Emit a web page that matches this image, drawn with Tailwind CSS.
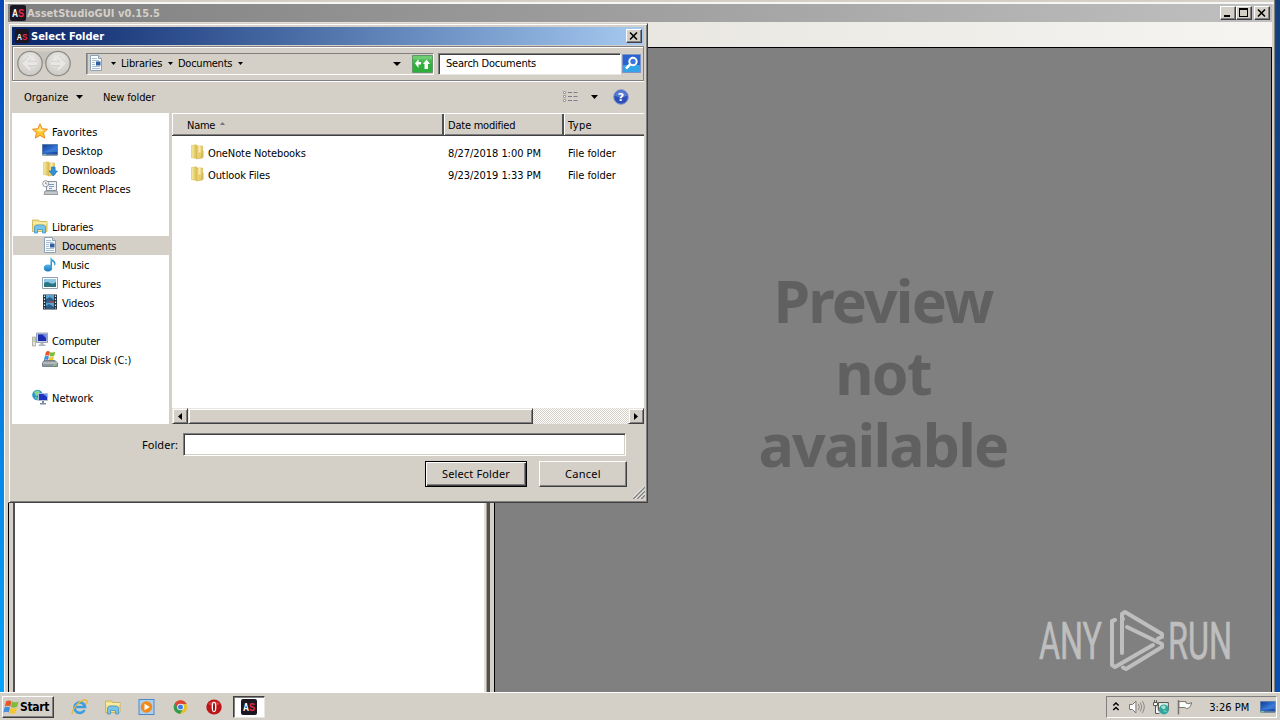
<!DOCTYPE html>
<html lang="en">
<head>
<meta charset="utf-8">
<title>AssetStudioGUI v0.15.5</title>
<script src="https://cdn.jsdelivr.net/npm/@tailwindcss/browser@4"></script>
</head>
<body class="w-[1280px] h-[720px] overflow-hidden relative flex flex-col text-[11px] leading-[13px] text-black whitespace-nowrap font-['DejaVu_Sans_Condensed','DejaVu_Sans',sans-serif] bg-[#d4d0c8]">

<!-- Shared icons -->
<svg class="absolute w-0 h-0">
  <defs>
    <linearGradient id="fold" x1="0" x2="1"><stop offset="0" stop-color="#f8eda6"/><stop offset="1" stop-color="#dcbc4c"/></linearGradient>
    <linearGradient id="scr" x1="0" y1="0" x2="1" y2="1"><stop offset="0" stop-color="#123a92"/><stop offset=".5" stop-color="#2f6fd0"/><stop offset="1" stop-color="#163f9c"/></linearGradient>
    <linearGradient id="note" x1="0" y1="0" x2="0" y2="1"><stop offset="0" stop-color="#58b4e6"/><stop offset="1" stop-color="#1679bd"/></linearGradient>
    <radialGradient id="nav" cx=".5" cy=".35" r=".65"><stop offset="0" stop-color="#efeeeb"/><stop offset="1" stop-color="#cac8c3"/></radialGradient>
    <symbol id="as" viewBox="0 0 16 16"><rect width="16" height="16" rx="2" fill="#1b1722"/><text x="2" y="12" font-family="Liberation Sans, sans-serif" font-weight="bold" font-size="11" textLength="6" lengthAdjust="spacingAndGlyphs" fill="#fff">A</text><text x="8" y="12" font-family="Liberation Sans, sans-serif" font-weight="bold" font-size="11" textLength="6" lengthAdjust="spacingAndGlyphs" fill="#f0284c">S</text></symbol>
    <symbol id="doc" viewBox="0 0 16 16"><path d="M2.500.5h8l3 3v12h-11z" fill="#fafcfe" stroke="#8aa0b4"/><path d="M10.500.5v3h3" fill="#cfdbe6" stroke="#8aa0b4"/><path d="M4 3.500h5M4 5.500h7M4 7.500h3M4 9.500h3M4 11.500h8M4 13.500h8" stroke="#a8bdd2"/><path d="M8 6.500h4.500v4H8z" fill="#2d5f9e"/></symbol>
    <symbol id="folder" viewBox="0 0 16 16"><path d="M1.500 1.500l5-.8v13.800l-5-1z" fill="url(#fold)" stroke="#d8bf62" stroke-width=".6"/><path d="M6.500 2h6v12l-6 1z" fill="#e8cf6c" stroke="#d0b04c" stroke-width=".6"/><path d="M8.500 1.500l2-.5v8l-1-1-1 1z" fill="#f8efb8"/><path d="M12 6l1.500 1v6.500l-3 .5z" fill="#d8ba58"/></symbol>
    <symbol id="libs" viewBox="0 0 16 16"><path d="M.5 3.500V2h6l1 1.500h7.500v10H.5z" fill="#f4e184" stroke="#c9ab48" stroke-width=".8"/><path d="M1 5h14" stroke="#fdf6c8"/><path d="M2.500 15V8.500l2-1.500h7l2 1.500V15h-3v-3.500h-5V15z" fill="#76c4ea" stroke="#4792c0" stroke-width=".8"/></symbol>
    <symbol id="desk" viewBox="0 0 16 16"><path d="M.5 2.500h15v10H.5z" fill="url(#scr)" stroke="#5c7ea8"/><path d="M1 10q7-1 14-6v6z" fill="#5ba0ec" opacity=".4"/><path d="M.5 12h15v1.700H.5z" fill="#5c7898"/><path d="M1 12.300h3v1H1z" fill="#7ce07c"/></symbol>
    <symbol id="pc" viewBox="0 0 16 16"><path d="M.5 5h3v9h-3z" fill="#e4e4da" stroke="#9a9a8c" stroke-width=".7"/><path d="M1.500 7h1M1.500 9h1" stroke="#5c9c3c"/><path d="M4.500 1h11v9.500h-11z" fill="#c8d0de" stroke="#8491a8" stroke-width=".8"/><path d="M6 2.300h8.300v6.700H6z" fill="#1a2cae"/><path d="M10 2.300h4.300v4z" fill="#6a8cf0"/><path d="M8.500 10.500h3v2h2v1.500h-7v-1.500h2z" fill="#aeb6c2"/></symbol>
    <symbol id="flag" viewBox="0 0 16 16"><path d="M2.500 2.500Q5 .500 8 2.300L6.800 7.600Q4 6 1.300 7.800z" fill="#e8572a"/><path d="M8.500 2.600Q11.500 4.200 15 2.400L13.700 7.800Q10.500 9.400 7.300 7.900z" fill="#7dbb3c"/><path d="M1 8.600Q4 7 6.500 8.500L5.300 13.500Q3 12 -.2 13.800z" fill="#3f8ee0"/><path d="M7 8.900Q10.300 10.400 13.400 8.800L12.200 13.800Q9 15.500 5.800 13.900z" fill="#f7c62e"/></symbol>
  </defs>
</svg>

<!-- Desktop with the main application window -->
<main class="h-[692px] flex bg-linear-to-b from-[#0846b8] via-[#0878dc] via-50% to-[#08a4fc]">
  <div class="w-1"></div>
  <div class="flex-1 flex flex-col bg-[#d4d0c8] border-l border-l-white pl-[3px] pr-0.5">
    <div class="h-0.5"></div><div class="h-0.5 bg-white/80 -ml-[3px] -mr-0.5"></div>
    <div class="h-[18px] flex items-center bg-linear-to-r from-[#808080] to-[#c0c0c0] text-[#d4d0c8] font-bold pl-0.5 pr-0.5">
      <svg class="size-4 mr-px"><use href="#as"/></svg>
      <span class="tracking-[.05px]">AssetStudioGUI v0.15.5</span>
      <div class="ml-auto flex">
        <div class="w-4 h-3.5 bg-[#d4d0c8] border border-t-white border-l-white border-r-[#404040] border-b-[#404040] shadow-[inset_-1px_-1px_#808080]"><svg viewBox="0 0 14 12" class="w-3.5 h-3"><path d="M3 8h6v2H3z"/></svg></div>
        <div class="w-4 h-3.5 bg-[#d4d0c8] border border-t-white border-l-white border-r-[#404040] border-b-[#404040] shadow-[inset_-1px_-1px_#808080]"><svg viewBox="0 0 14 12" class="w-3.5 h-3"><path d="M2 1h9v9H2zM3 3v6h7V3z" fill-rule="evenodd"/></svg></div>
        <div class="ml-0.5 w-4 h-3.5 bg-[#d4d0c8] border border-t-white border-l-white border-r-[#404040] border-b-[#404040] shadow-[inset_-1px_-1px_#808080]"><svg viewBox="0 0 14 12" class="w-3.5 h-3"><path d="M3 2.500l7 7M10 2.500l-7 7" stroke="#000" stroke-width="1.600"/></svg></div>
      </div>
    </div>
    <div class="h-[25px] bg-linear-to-r from-[#dedad2] to-[#f5f4f1]"></div>
    <div class="flex-1 flex">
      <div class="w-[482px] flex border-l border-black bg-[#d4d0c8] pl-1">
        <div class="flex-1 border-l-2 border-[#505050] bg-white border-r-2 border-r-[#e4e0d8]"></div>
        <div class="w-px bg-[#a8a49c]"></div><div class="w-[3px] bg-[#505050]"></div>
      </div>
      <div class="w-1 bg-[#d4d0c8]"></div>
      <div class="flex-1 bg-[#808080] border border-b-0 border-black pt-[216px] flex flex-col items-center text-center text-[#606060] font-['Noto_Sans',sans-serif] font-bold text-[59px] leading-[72px] tracking-[-1.8px]">
        <div>Preview</div><div>not</div><div>available</div>
      </div>
    </div>
  </div>
  <div class="w-px bg-[#808080]"></div><div class="w-px bg-[#404040]"></div>
  <div class="w-1 bg-linear-to-b from-[#123f7c] to-[#0850b0]"></div>
</main>

<!-- Taskbar -->
<footer class="h-[28px] border-t border-white bg-[#d4d0c8] flex pt-[3px] pb-0.5 pl-0.5 pr-[3px]">
  <div class="w-[52px] h-[22px] flex items-center border border-t-white border-l-white border-r-[#404040] border-b-[#404040] shadow-[inset_-1px_-1px_#808080] font-bold">
    <svg class="w-[17px] h-4 shrink-0"><use href="#flag"/></svg><span class="text-[12px] tracking-[-.3px]">Start</span>
  </div>
  <div class="flex items-center gap-[17px] ml-[17px] h-[22px]">
    <svg class="w-[17px] h-4" viewBox="0 0 17 16"><path d="M13.500 11A5.300 5.300 0 1 1 14 8H4" fill="none" stroke="#3c9ee0" stroke-width="2.700"/><path d="M1.500 15C-.5 12 9-.5 15.500 1.200c1.200 1 .3 3-.5 4" fill="none" stroke="#e9b83a" stroke-width="1.300"/></svg>
    <svg class="w-4 h-4"><use href="#libs"/></svg>
    <svg class="w-[17px] h-4" viewBox="0 0 16 16"><rect x=".5" y=".5" width="15" height="15" fill="#a8d0f0" stroke="#4c88c8"/><circle cx="8" cy="8" r="5.800" fill="#f08a1c"/><path d="M6 4.700l5.200 3.300L6 11.300z" fill="#fff"/></svg>
    <svg class="w-[17px] h-4" viewBox="0 0 16 16"><circle cx="8" cy="8" r="6.800" fill="#e8c02c"/><path d="M2 4.700A6.900 6.900 0 0 1 14.200 5H8L5 9.700z" fill="#dc4436"/><path d="M2 4.700A6.900 6.900 0 0 0 7.500 14.900L10.500 10 5 9z" fill="#2f9c50"/><circle cx="8" cy="8" r="3.300" fill="#fff"/><circle cx="8" cy="8" r="2.500" fill="#3b7de0"/></svg>
    <svg class="w-4 h-4" viewBox="0 0 16 16"><ellipse cx="8" cy="8" rx="7.700" ry="7.500" fill="#bc1418"/><path d="M2 5a7 5 0 0 1 12 0q-6 3-12 0" fill="#e25450" opacity=".7"/><ellipse cx="8" cy="8" rx="2.400" ry="5.200" fill="#fff"/><ellipse cx="8" cy="8" rx="1" ry="4.200" fill="#8c1014"/></svg>
  </div>
  <div class="ml-[11px] w-8 h-[22px] bg-white border border-t-[#404040] border-l-[#404040] border-r-[#e8e6e0] border-b-[#e8e6e0] shadow-[inset_1px_1px_#808080] flex items-center justify-center"><svg class="size-4"><use href="#as"/></svg></div>
  <div class="ml-auto w-[171px] h-[22px] border border-t-[#808080] border-l-[#808080] border-r-white border-b-white flex items-center pl-[5px]">
    <svg class="w-2 h-3" viewBox="0 0 8 12"><path d="M1.300 4.500L4 2l2.700 2.500M1.300 9L4 6.500 6.700 9" fill="none" stroke="#000" stroke-width="1.500"/></svg>
    <svg class="w-4 h-4 ml-[9px]" viewBox="0 0 16 16"><path d="M.5 5.500h3L7 2v12l-3.500-3.500h-3z" fill="#fff" stroke="#77746e"/><path d="M9.500 5q2 3 0 6M11.500 3.500q3 4.500 0 9M13.500 2q4 6 0 12" fill="none" stroke="#8c8983"/></svg>
    <svg class="w-[17px] h-4 ml-2" viewBox="0 0 17 16"><path d="M5.500 3.500h10v8h-10z" fill="#dff0f0" stroke="#55524c"/><path d="M.5 3.500h4v3h-4zM1.500 1v2.500M3.500 1v2.500M2.500 6.500v8h4" fill="#fff" stroke="#55524c"/><circle cx="11" cy="10.500" r="5" fill="#2fa6a0"/><path d="M8 8q3-3 5 0-1 3-3 2zM10 12q3-1 4 1" fill="#a6e2c4"/></svg>
    <svg class="w-4 h-4 ml-[7px]" viewBox="0 0 16 16"><path d="M1.500 1v14.500" stroke="#77746e" stroke-width="1.500"/><path d="M2 2.500h7v1.500q3 1.500 6-.5-1 4-3 5.500Q9 10.500 8 8.500H2z" fill="#fff" stroke="#77746e"/></svg>
    <span class="ml-[17px]">3:26 PM</span>
    <svg class="w-4 h-4 ml-[11px]"><use href="#desk"/></svg>
  </div>
</footer>

<!-- Watermark over the preview area -->
<svg class="absolute left-[1036px] top-[606px] w-[210px] h-[76px]" viewBox="0 0 210 76">
  <g fill="#bebebe" stroke="#bebebe" stroke-width=".7" font-family="Roboto, sans-serif" font-size="51"><text x="3" y="53" textLength="63" lengthAdjust="spacingAndGlyphs">ANY</text><text x="132" y="53" textLength="64" lengthAdjust="spacingAndGlyphs">RUN</text></g>
  <path d="M79 14l-3 1v44l3 2 38-22M86 47V8l3-2 37 22v3l-4 1.500M86 14l1-1M91 21l35 17v3L90 63l-3-1.500" fill="none" stroke="#bebebe" stroke-width="4" stroke-linejoin="round" stroke-linecap="round"/>
</svg>

<!-- Select Folder dialog -->
<section class="absolute left-2 top-[23px] w-[640px] h-[480px] bg-[#d4d0c8] border border-t-[#d4d0c8] border-l-[#d4d0c8] border-r-[#404040] border-b-[#404040] shadow-[inset_1px_1px_#fff,inset_-1px_-1px_#808080] p-[3px] flex flex-col">
  <header class="h-[18px] shrink-0 flex items-center bg-linear-to-r from-[#0a246a] to-[#a6caf0] text-white font-bold pl-[3px] pr-0.5">
    <svg class="w-[14px] h-[14px] mr-0.5"><use href="#as"/></svg><span>Select Folder</span>
    <div class="ml-auto w-4 h-3.5 bg-[#d4d0c8] border border-t-white border-l-white border-r-[#404040] border-b-[#404040] shadow-[inset_-1px_-1px_#808080]"><svg viewBox="0 0 14 12" class="w-3.5 h-3"><path d="M3 2.500l7 7M10 2.500l-7 7" stroke="#000" stroke-width="1.600"/></svg></div>
  </header>

  <!-- Address row -->
  <div class="mt-px h-[35px] shrink-0 border border-[#808080] shadow-[inset_1px_1px_#fff,0_1px_#fff] flex items-center pl-1 pr-px">
    <svg class="w-[54px] h-[27px] shrink-0" viewBox="0 0 54 27"><path d="M13 1.500h28v12H13z" fill="#c6c3bc"/><g fill="url(#nav)" stroke="#8e8c87" stroke-width="1.300"><circle cx="13" cy="13.500" r="12.200"/><circle cx="41" cy="13.500" r="12.200"/></g><g fill="none" stroke="#cfcdc8" stroke-width="4.500"><path d="M20 13.500H8M13 7.500l-6 6 6 6M34 13.500h12M41 7.500l6 6-6 6"/></g><g fill="none" stroke="#e8e7e3" stroke-width="3"><path d="M20 13.500H8M13 7.500l-6 6 6 6M34 13.500h12M41 7.500l6 6-6 6"/></g></svg>
    <div class="ml-[15px] w-[348px] h-[22px] border border-t-[#808080] border-l-[#808080] border-r-white border-b-white shadow-[inset_1px_0_#a09c94] flex items-center">
      <svg class="w-4 h-4 ml-px -mt-0.5"><use href="#doc"/></svg>
      <svg class="w-[5px] h-[3px] ml-[7px]" viewBox="0 0 5 3"><path d="M0 0h5L2.500 3z"/></svg>
      <span class="ml-[5px] -mt-px w-[47px] tracking-[-.18px]">Libraries</span>
      <svg class="w-[5px] h-[3px]" viewBox="0 0 5 3"><path d="M0 0h5L2.500 3z"/></svg>
      <span class="ml-[5px] -mt-px w-[60px] tracking-[-.25px]">Documents</span>
      <svg class="w-[5px] h-[3px]" viewBox="0 0 5 3"><path d="M0 0h5L2.500 3z"/></svg>
      <svg class="w-2 h-1 ml-auto mr-[11px]" viewBox="0 0 8 4"><path d="M0 0h8L4 4z"/></svg>
      <svg class="w-[21px] h-[18px] shrink-0" viewBox="0 0 21 18"><path d="M.5.500h20v17H.5z" fill="#2fae3c" stroke="#5f9868"/><path d="M1 1h19v7H1z" fill="#6ccc70"/><path d="M1 4.500h19v4H1z" fill="#44b84c"/><path d="M3 8.500L6.500 4v3h2.500v2.500H6.500V13zM12 9.500h0M11 9l3.500-4.500L18 9h-2v5h-3.500V9z" fill="#fff"/></svg>
    </div>
    <div class="ml-1 w-[183px] h-[22px] bg-white border border-t-[#808080] border-l-[#808080] border-r-white border-b-[#e8e6e0] shadow-[inset_1px_1px_#404040] flex items-center pl-[7px] tracking-[-.22px]">Search Documents</div>
    <svg class="w-[19px] h-[19px] ml-px shrink-0" viewBox="0 0 19 19"><path d="M.5.500h18v18H.5z" fill="#2a62ce" stroke="#7c94c4"/><path d="M1 11h17v7H1z" fill="#34a4e8"/><circle cx="11" cy="7.500" r="3.700" fill="#3c78dc" stroke="#fff" stroke-width="2"/><path d="M8 10.500L4 14.500" stroke="#fff" stroke-width="2.500"/></svg>
  </div>

  <!-- Toolbar -->
  <div class="h-8 shrink-0 flex items-center pl-3 pr-[15px]">
    <span class="w-[52px]">Organize</span>
    <svg class="w-[7px] h-1" viewBox="0 0 7 4"><path d="M0 0h7L3.500 4z"/></svg>
    <span class="ml-5 tracking-[-.12px]">New folder</span>
    <svg class="w-4 h-3 ml-auto" viewBox="0 0 16 12"><path d="M.5.500h2v2h-2zM.5 4.500h2v2h-2zM.5 8.500h2v2h-2z" fill="#fff" stroke="#8c8984" stroke-width=".8"/><path d="M5 1.500h4M10.500 1.500h4M5 5.500h4M10.500 5.500h4M5 9.500h4M10.500 9.500h4" stroke="#7c7e8c"/></svg>
    <svg class="w-[7px] h-1 ml-3 mr-[15px]" viewBox="0 0 7 4"><path d="M0 0h7L3.500 4z"/></svg>
    <svg class="w-4 h-4" viewBox="0 0 16 16"><circle cx="8" cy="8" r="7.300" fill="#2c50b8" stroke="#8496cc"/><path d="M2 7a6 5.500 0 0 1 12 0q-6 2-12 0" fill="#7898e4" opacity=".6"/><text x="8" y="12" text-anchor="middle" font-size="11" font-weight="bold" font-family="DejaVu Sans, sans-serif" fill="#fff">?</text></svg>
  </div>

  <!-- Sidebar and file list -->
  <div class="h-[311px] shrink-0 flex">
    <nav class="w-[157px] bg-white pt-[9px] flex flex-col [&>div]:h-[19px] [&>div]:pt-px [&>div]:flex [&>div]:items-center [&>div]:shrink-0 [&_svg]:size-4 [&_svg]:-mt-0.5">
      <div class="pl-5 gap-1 tracking-[.1px]"><svg viewBox="0 0 16 16"><path d="M8 .8l2.200 4.900 5.300.5-4 3.600 1.200 5.300L8 12.400l-4.700 2.700 1.200-5.300-4-3.600 5.300-.5z" fill="#fdc62f" stroke="#e88c28"/><path d="M8 3l1.500 3.500 3 .5L8 9 4 7l2.500-.5z" fill="#ffe88c"/></svg>Favorites</div>
      <div class="pl-[30px] gap-1"><svg><use href="#desk"/></svg>Desktop</div>
      <div class="pl-[30px] gap-1 tracking-[-.15px]"><svg viewBox="0 0 16 16"><use href="#folder" width="16" height="16"/><path d="M9.500 6h3.500v4h2.500l-4.200 5-4.300-5h2.500z" fill="#2f93dc" stroke="#1c6cac" stroke-width=".6"/></svg>Downloads</div>
      <div class="pl-[30px] gap-1"><svg viewBox="0 0 16 16"><path d="M4.500 1.500h10v9h-10z" fill="#eef2f6" stroke="#8a929c"/><path d="M7 4.500h5M7 6.500h5M7 8.500h3" stroke="#7c9cbc"/><path d="M3 11h12l1 3.500H2z" fill="#c4c8cc" stroke="#84898f" stroke-width=".8"/><circle cx="3.700" cy="3.700" r="3" fill="#fff" stroke="#8a929c"/><path d="M3.700 2v2h1.500" fill="none" stroke="#555" stroke-width=".7"/></svg>Recent Places</div>
      <div></div>
      <div class="pl-5 gap-1 tracking-[-.18px]"><svg><use href="#libs"/></svg>Libraries</div>
      <div class="ml-px pl-[29px] gap-1 bg-[#d4d0c8] tracking-[-.25px]"><svg><use href="#doc"/></svg>Documents</div>
      <div class="pl-[30px] gap-1 tracking-[-.2px]"><svg viewBox="0 0 16 16"><path d="M8.500 12V.5c.5 3 5.500 3.500 5 7.500-.2 1-.8 1.500-1.300 1.800.5-2.500-.7-3.800-2.200-4.300V12z" fill="url(#note)"/><ellipse cx="6" cy="12" rx="4.200" ry="3.400" fill="url(#note)"/></svg>Music</div>
      <div class="pl-[30px] gap-1"><svg viewBox="0 0 16 16"><path d="M.5 2.500h15v11H.5z" fill="#fff" stroke="#94a0ac"/><path d="M2 4h12v8H2z" fill="#8cc8e8"/><path d="M2 8q3-2 6 0t6-1v5H2z" fill="#2c7484"/></svg>Pictures</div>
      <div class="pl-[30px] gap-1 tracking-[-.1px]"><svg viewBox="0 0 16 16"><path d="M1 .5h14v15H1z" fill="#22303c"/><path d="M4 1h8v6.500H4zM4 8.500h8V15H4z" fill="#58a4d4"/><path d="M4 5l4-2 4 3v1.500H4zM4 12l3-2 5 3v2H4z" fill="#2c5c84"/><path d="M2.500 1.500v13M13.500 1.500v13" stroke="#e4e8ec" stroke-width="1.200" stroke-dasharray="1.500 1.500"/><path d="M7 8h5" stroke="#d83c30"/></svg>Videos</div>
      <div></div>
      <div class="pl-5 gap-1 tracking-[-.15px]"><svg><use href="#pc"/></svg>Computer</div>
      <div class="pl-[30px] gap-1 tracking-[-.13px]"><svg viewBox="0 0 16 16"><use href="#flag" x="2" y="-1" width="12" height="12"/><path d="M2 9.500h11l2.500 2.500v3.500H.5V12z" fill="#8e979d" stroke="#667078" stroke-width=".8"/><path d="M1 12h14" stroke="#d6dcde"/><path d="M11 14h3" stroke="#6ce04c" stroke-width="1.300"/></svg>Local Disk (C:)</div>
      <div></div>
      <div class="pl-5 gap-1"><svg viewBox="0 0 16 16"><circle cx="5.500" cy="6" r="5.300" fill="#2c94cc"/><path d="M2 3q4-3 6 0-1 3-4 4z" fill="#84dc84"/><path d="M3 9q2-1 3 2" stroke="#6cd06c" fill="none" stroke-width="1.500"/><path d="M6.500 4.500h9v7h-9z" fill="#1c34c0" stroke="#b0bcd8"/><path d="M11 5h4v3z" fill="#7094f0"/><path d="M10 12h2v2h2v1.500H8V14h2z" fill="#7c8ca4"/></svg>Network</div>
    </nav>
    <div class="w-[3px]"></div>
    <div class="w-[472px] bg-white flex flex-col">
      <div class="h-[23px] flex bg-[#d4d0c8] border-t border-t-white border-b border-b-[#404040] shadow-[inset_0_-1px_#808080]">
        <div class="w-[272px] border-l border-l-white border-r-2 border-r-[#505050] flex items-center pl-[14px] pt-px tracking-[-.25px]">Name<svg class="w-[5px] h-[3px] ml-[5px] -mt-1" viewBox="0 0 5 3"><path d="M0 3h5L2.500 0z" fill="#77746e"/></svg></div>
        <div class="w-[120px] border-l border-l-white border-r-2 border-r-[#505050] flex items-center pl-[3px] pt-px tracking-[-.22px]">Date modified</div>
        <div class="flex-1 border-l border-l-white flex items-center pl-[3px] pt-px tracking-[.35px]">Type</div>
      </div>
      <div class="flex-1 pt-[6px]">
        <div class="h-[22px] flex items-center pl-[18px]"><svg class="size-4 mr-0.5 -mt-0.5"><use href="#folder"/></svg><span class="w-[240px] tracking-[-.1px]">OneNote Notebooks</span><span class="w-[120px] tracking-[-.05px]">8/27/2018 1:00 PM</span><span class="tracking-[-.05px]">File folder</span></div>
        <div class="h-[22px] flex items-center pl-[18px]"><svg class="size-4 mr-0.5 -mt-0.5"><use href="#folder"/></svg><span class="w-[240px] tracking-[-.1px]">Outlook Files</span><span class="w-[120px] tracking-[-.05px]">9/23/2019 1:33 PM</span><span class="tracking-[-.05px]">File folder</span></div>
      </div>
      <div class="h-4 flex bg-[conic-gradient(#fff_25%,#d4d0c8_0_50%,#fff_0_75%,#d4d0c8_0)] bg-[length:2px_2px]">
        <div class="w-4 bg-[#d4d0c8] border border-t-[#e8e6e0] border-l-[#e8e6e0] border-r-[#404040] border-b-[#404040] shadow-[inset_1px_1px_#fff,inset_-1px_-1px_#808080] flex items-center justify-center"><svg class="w-1 h-[7px]" viewBox="0 0 4 7"><path d="M4 0v7L0 3.500z"/></svg></div>
        <div class="w-[345px] bg-[#d4d0c8] border border-t-[#e8e6e0] border-l-[#e8e6e0] border-r-[#404040] border-b-[#404040] shadow-[inset_1px_1px_#fff,inset_-1px_-1px_#808080]"></div>
        <div class="w-4 ml-auto bg-[#d4d0c8] border border-t-[#e8e6e0] border-l-[#e8e6e0] border-r-[#404040] border-b-[#404040] shadow-[inset_1px_1px_#fff,inset_-1px_-1px_#808080] flex items-center justify-center"><svg class="w-1 h-[7px]" viewBox="0 0 4 7"><path d="M0 0v7l4-3.500z"/></svg></div>
      </div>
    </div>
  </div>

  <!-- Folder field and buttons -->
  <div class="mt-[9px] h-[23px] shrink-0 flex items-center pl-[130px] font-['Noto_Sans','DejaVu_Sans_Condensed',sans-serif]">
    <span class="w-[41px] tracking-[.05px]">Folder:</span>
    <div class="w-[443px] h-[23px] bg-white border border-t-[#808080] border-l-[#808080] border-r-white border-b-white shadow-[inset_1px_1px_#404040,inset_-1px_-1px_#d4d0c8]"></div>
  </div>
  <div class="mt-[5px] flex shrink-0 gap-3 pl-[413px] font-['Noto_Sans','DejaVu_Sans_Condensed',sans-serif]">
    <div class="w-[102px] h-[26px] pb-0.5 border border-black shadow-[inset_1px_1px_#fff,inset_-1px_-1px_#404040,inset_-2px_-2px_#808080] flex items-center justify-center tracking-[.15px]">Select Folder</div>
    <div class="w-[88px] h-[26px] pb-0.5 border border-t-white border-l-white border-r-[#404040] border-b-[#404040] shadow-[inset_-1px_-1px_#808080] flex items-center justify-center tracking-[.3px]">Cancel</div>
  </div>
  <svg class="w-3 h-3 ml-auto -mr-px mt-auto shrink-0" viewBox="0 0 12 12"><path d="M0 12L12 0M4 12l8-8M8 12l4-4" stroke="#808080" stroke-width="1.500"/><path d="M-1.500 12L12-1.500M2.500 12L12 2.500M6.500 12L12 6.500" stroke="#fff" stroke-width=".8"/></svg>
</section>
</body>
</html>
